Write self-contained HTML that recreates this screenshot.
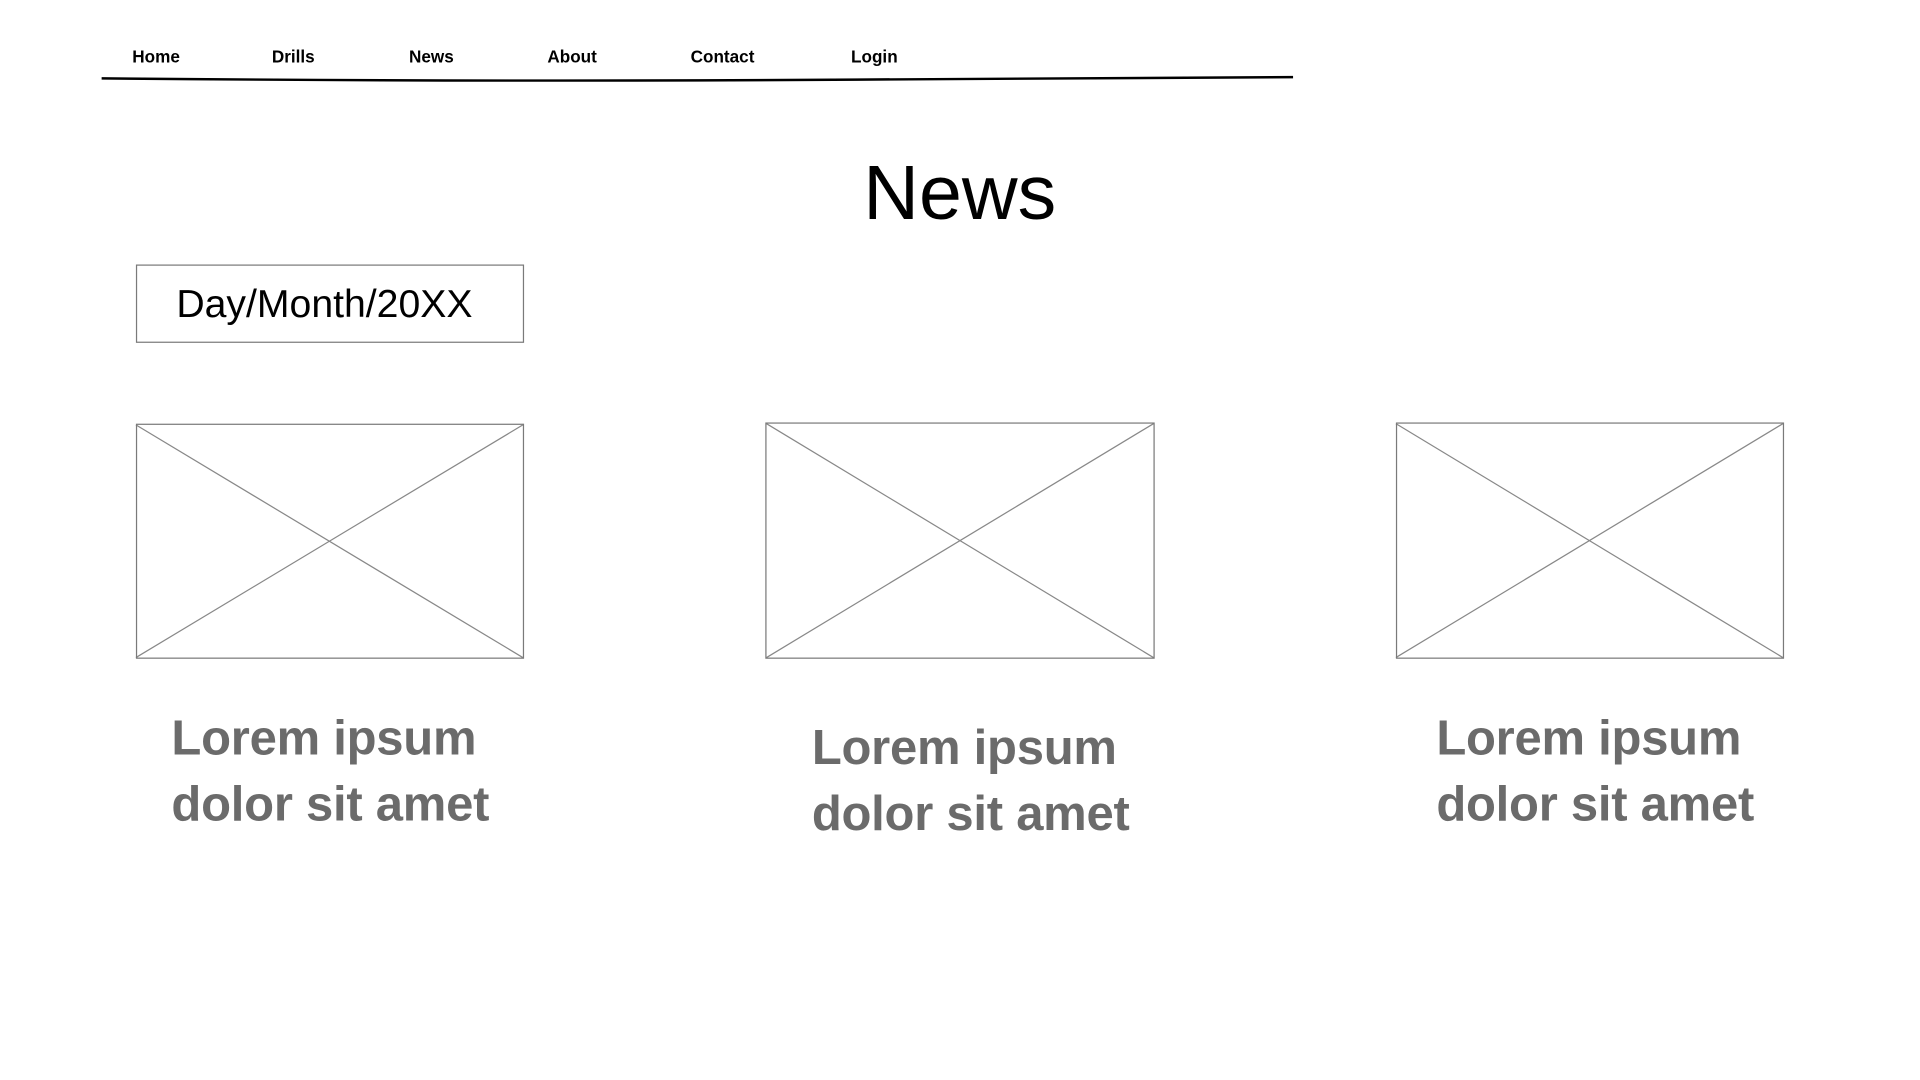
<!DOCTYPE html>
<html><head><meta charset="utf-8"><style>
html,body{margin:0;padding:0;background:#fff;width:1920px;height:1080px;overflow:hidden}
#w{position:absolute;left:0;top:0;width:1568px;height:882px;transform:scale(1.22449);transform-origin:0 0;font-family:"Liberation Sans",sans-serif}
.nav{position:absolute;top:38px;font-size:14px;font-weight:bold;color:#000;line-height:16px}
.box{position:absolute;border:1px solid #7a7a7a;box-sizing:border-box}
.lorem{position:absolute;font-weight:bold;color:#6b6b6b;font-size:40px;line-height:54px;letter-spacing:-0.2px}
</style></head><body><div id="w">
<div class="nav" style="left:108px">Home</div>
<div class="nav" style="left:222px">Drills</div>
<div class="nav" style="left:334px">News</div>
<div class="nav" style="left:447px">About</div>
<div class="nav" style="left:564px">Contact</div>
<div class="nav" style="left:695px">Login</div>
<svg style="position:absolute;left:0;top:0" width="1568" height="882">
<path d="M83 64 Q400 67 700 65 T1056 63" stroke="#000" stroke-width="2" fill="none"/>
<g stroke="#888" stroke-width="1" fill="none">
<line x1="111" y1="347" x2="427" y2="537"/><line x1="427" y1="347" x2="111" y2="537"/>
<line x1="626" y1="346" x2="942" y2="537"/><line x1="942" y1="346" x2="626" y2="537"/>
<line x1="1140" y1="346" x2="1456" y2="537"/><line x1="1456" y1="346" x2="1140" y2="537"/>
</g></svg>
<div style="position:absolute;left:705px;top:120px;font-size:63px;line-height:76px;color:#000">News</div>
<div class="box" style="left:111px;top:216px;width:317px;height:64px"></div>
<div style="position:absolute;left:144px;top:229px;font-size:32px;line-height:38px;color:#000">Day/Month/20XX</div>
<div class="box" style="left:111px;top:346px;width:317px;height:192px"></div>
<div class="box" style="left:625px;top:345px;width:318px;height:193px"></div>
<div class="box" style="left:1140px;top:345px;width:317px;height:193px"></div>
<div class="lorem" style="left:140px;top:576px">Lorem ipsum<br>dolor sit amet</div>
<div class="lorem" style="left:663px;top:584px">Lorem ipsum<br>dolor sit amet</div>
<div class="lorem" style="left:1173px;top:576px">Lorem ipsum<br>dolor sit amet</div>
</div></body></html>
